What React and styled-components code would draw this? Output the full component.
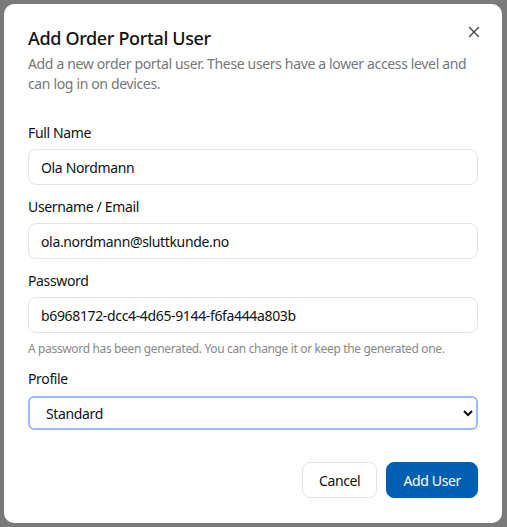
import React, { useState } from 'react';
import styled, { createGlobalStyle } from 'styled-components';

const GlobalStyle = createGlobalStyle`
    html, body {
        margin: 0;
        padding: 0;
        background: #7a7a7a;
        font-family: "Noto Sans", "Open Sans", sans-serif;
        letter-spacing: -0.022em;
    }
    * {
        box-sizing: border-box;
    }
`;

const Overlay = styled.div`
    width: 507px;
    height: 527px;
    padding: 4px 0 0 4px;
    background: #7a7a7a;
`;

const Dialog = styled.div`
    position: relative;
    width: 498px;
    height: 519px;
    background: #fff;
    border-radius: 10px;
    padding: 24px;
    display: flex;
    flex-direction: column;
`;

const CloseButton = styled.button`
    position: absolute;
    top: 18px;
    right: 18px;
    width: 20px;
    height: 20px;
    padding: 0;
    border: 0;
    background: none;
    display: flex;
    align-items: center;
    justify-content: center;
    color: #444;
    cursor: pointer;
`;

const Header = styled.div`
    display: flex;
    flex-direction: column;
    gap: 6px;
    margin-bottom: 29px;
`;

const Title = styled.h2`
    margin: 0;
    font-size: 18px;
    line-height: 20px;
    font-weight: 500;
    color: #111;
`;

const Description = styled.p`
    margin: 0;
    font-size: 14px;
    line-height: 20px;
    color: #777;
`;

const Form = styled.form`
    display: flex;
    flex-direction: column;
    gap: 12px;
`;

const Field = styled.div`
    display: flex;
    flex-direction: column;
    gap: 6px;
`;

const Label = styled.label`
    font-size: 14px;
    line-height: 20px;
    font-weight: 450;
    color: #111;
`;

const TextInput = styled.input`
    width: 100%;
    height: 36px;
    padding: 0 12px;
    border: 1px solid #e4e4e7;
    border-radius: 8px;
    font-family: inherit;
    letter-spacing: inherit;
    font-size: 14px;
    color: #111;
    background: #fff;
    outline: none;
`;

const Hint = styled.p`
    margin: -4px 0 0;
    font-size: 12px;
    line-height: 16px;
    color: #888;
`;

const Select = styled.select`
    width: 100%;
    height: 34px;
    margin-top: 1px;
    padding: 0 12px;
    border: 2px solid ${p => (p.$focused ? '#93c0fb' : '#e4e4e7')};
    border-radius: 6px;
    font-family: inherit;
    letter-spacing: inherit;
    font-size: 14px;
    color: #111;
    background: #fff;
    outline: none;
`;

const Footer = styled.div`
    margin-top: 32px;
    display: flex;
    justify-content: flex-end;
    gap: 9px;
`;

const Button = styled.button`
    height: 36px;
    padding: 0 16px;
    border-radius: 8px;
    font-family: inherit;
    letter-spacing: inherit;
    font-size: 14px;
    font-weight: 450;
    cursor: pointer;
    border: 1px solid ${p => (p.$primary ? '#005fb0' : '#e4e4e7')};
    background: ${p => (p.$primary ? '#005fb0' : '#fff')};
    color: ${p => (p.$primary ? '#fff' : '#111')};
`;

export default function App() {
    const [name, setName] = useState('Ola Nordmann');
    const [email, setEmail] = useState('ola.nordmann@sluttkunde.no');
    const [password, setPassword] = useState('b6968172-dcc4-4d65-9144-f6fa444a803b');
    const [profile, setProfile] = useState('standard');

    return (
        <>
            <GlobalStyle />
            <Overlay>
                <Dialog>
                    <CloseButton aria-label="Close">
                        <svg width="12" height="12" viewBox="0 0 12 12" fill="none" stroke="currentColor" strokeWidth="1.4" strokeLinecap="round">
                            <path d="M1.5 1.5l9 9M10.5 1.5l-9 9" />
                        </svg>
                    </CloseButton>
                    <Header>
                        <Title>Add Order Portal User</Title>
                        <Description>
                            Add a new order portal user. These users have a lower access level and can log in on devices.
                        </Description>
                    </Header>
                    <Form onSubmit={e => e.preventDefault()}>
                        <Field>
                            <Label htmlFor="fullname">Full Name</Label>
                            <TextInput id="fullname" value={name} onChange={e => setName(e.target.value)} />
                        </Field>
                        <Field>
                            <Label htmlFor="username">Username / Email</Label>
                            <TextInput id="username" value={email} onChange={e => setEmail(e.target.value)} />
                        </Field>
                        <Field>
                            <Label htmlFor="password">Password</Label>
                            <TextInput id="password" value={password} onChange={e => setPassword(e.target.value)} />
                        </Field>
                        <Hint>A password has been generated. You can change it or keep the generated one.</Hint>
                        <Field>
                            <Label htmlFor="profile">Profile</Label>
                            <Select id="profile" $focused value={profile} onChange={e => setProfile(e.target.value)}>
                                <option value="standard">Standard</option>
                                <option value="limited">Limited</option>
                            </Select>
                        </Field>
                    </Form>
                    <Footer>
                        <Button type="button">Cancel</Button>
                        <Button type="button" $primary>Add User</Button>
                    </Footer>
                </Dialog>
            </Overlay>
        </>
    );
}
